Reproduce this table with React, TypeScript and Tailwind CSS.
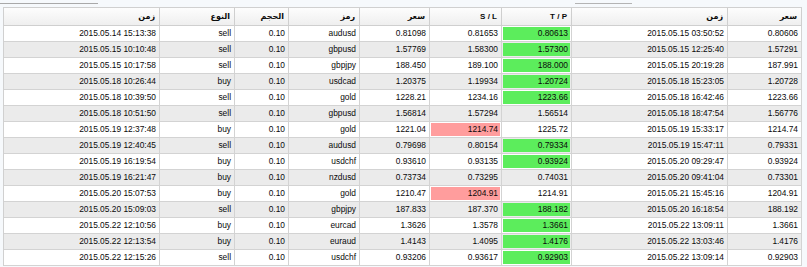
import React from "react";

type Row = {
  t: string; type: string; vol: string; sym: string; price: string;
  sl: string; tp: string; ct: string; cp: string; slc?: boolean; tpc?: boolean;
};

const rows: Row[] = [
  { t: "2015.05.14 15:13:38", type: "sell", vol: "0.10", sym: "audusd", price: "0.81098", sl: "0.81653", tp: "0.80613", ct: "2015.05.15 03:50:52", cp: "0.80606", tpc: true },
  { t: "2015.05.15 10:10:48", type: "sell", vol: "0.10", sym: "gbpusd", price: "1.57769", sl: "1.58300", tp: "1.57300", ct: "2015.05.15 12:25:40", cp: "1.57291", tpc: true },
  { t: "2015.05.15 10:17:58", type: "sell", vol: "0.10", sym: "gbpjpy", price: "188.450", sl: "189.100", tp: "188.000", ct: "2015.05.15 20:19:28", cp: "187.991", tpc: true },
  { t: "2015.05.18 10:26:44", type: "buy", vol: "0.10", sym: "usdcad", price: "1.20375", sl: "1.19934", tp: "1.20724", ct: "2015.05.18 15:23:05", cp: "1.20728", tpc: true },
  { t: "2015.05.18 10:39:50", type: "sell", vol: "0.10", sym: "gold", price: "1228.21", sl: "1234.16", tp: "1223.66", ct: "2015.05.18 16:42:46", cp: "1223.66", tpc: true },
  { t: "2015.05.18 10:51:50", type: "sell", vol: "0.10", sym: "gbpusd", price: "1.56814", sl: "1.57294", tp: "1.56514", ct: "2015.05.18 18:47:54", cp: "1.56776" },
  { t: "2015.05.19 12:37:48", type: "buy", vol: "0.10", sym: "gold", price: "1221.04", sl: "1214.74", tp: "1225.72", ct: "2015.05.19 15:33:17", cp: "1214.74", slc: true },
  { t: "2015.05.19 12:40:45", type: "sell", vol: "0.10", sym: "audusd", price: "0.79698", sl: "0.80154", tp: "0.79334", ct: "2015.05.19 15:47:11", cp: "0.79331", tpc: true },
  { t: "2015.05.19 16:19:54", type: "buy", vol: "0.10", sym: "usdchf", price: "0.93610", sl: "0.93135", tp: "0.93924", ct: "2015.05.20 09:29:47", cp: "0.93924", tpc: true },
  { t: "2015.05.19 16:21:47", type: "buy", vol: "0.10", sym: "nzdusd", price: "0.73734", sl: "0.73295", tp: "0.74031", ct: "2015.05.20 09:41:04", cp: "0.73301" },
  { t: "2015.05.20 15:07:53", type: "buy", vol: "0.10", sym: "gold", price: "1210.47", sl: "1204.91", tp: "1214.91", ct: "2015.05.21 15:45:16", cp: "1204.91", slc: true },
  { t: "2015.05.20 15:09:03", type: "sell", vol: "0.10", sym: "gbpjpy", price: "187.833", sl: "187.370", tp: "188.182", ct: "2015.05.20 16:18:54", cp: "188.192", tpc: true },
  { t: "2015.05.22 12:10:56", type: "buy", vol: "0.10", sym: "eurcad", price: "1.3626", sl: "1.3578", tp: "1.3661", ct: "2015.05.22 13:09:11", cp: "1.3661", tpc: true },
  { t: "2015.05.22 12:13:54", type: "buy", vol: "0.10", sym: "euraud", price: "1.4143", sl: "1.4095", tp: "1.4176", ct: "2015.05.22 13:03:46", cp: "1.4176", tpc: true },
  { t: "2015.05.22 12:15:26", type: "sell", vol: "0.10", sym: "usdchf", price: "0.93206", sl: "0.93617", tp: "0.92903", ct: "2015.05.22 13:09:14", cp: "0.92903", tpc: true },
];

const headers = ["زمن", "النوع", "الحجم", "رمز", "سعر", "S / L", "T / P", "زمن", "سعر"];

const grid = "grid grid-cols-[156px_75px_54px_71px_70px_72px_70px_156px_74px]";

function Cell({ v, color }: { v: string; color?: "g" | "r" }) {
  if (color) {
    return (
      <div className="border-r border-b border-[#d3d3d3] h-[16px] p-[1px]">
        <div
          className={
            "h-full flex items-center justify-end pr-[2px] " +
            (color === "g" ? "bg-[#5ced5c]" : "bg-[#ff9d9d]")
          }
        >
          {v}
        </div>
      </div>
    );
  }
  return (
    <div className="border-r border-b border-[#d3d3d3] h-[16px] flex items-center justify-end pr-[3px]">
      {v}
    </div>
  );
}

export default function App() {
  return (
    <div
      className="w-[807px] h-[267px] bg-[#f6f9fc] overflow-hidden text-[8.4px] text-[#0a0a0a]"
      style={{ fontFamily: '"Liberation Sans", "DejaVu Sans", Arial, sans-serif' }}
    >
      <div className="h-[7px] flex pt-[3px]">
        <div className="w-[98px] h-[1px] bg-[#a9a9a9]" />
        <div className="w-[477px]" />
        <div className="w-[57px] h-[1px] bg-[#b4b4b4]" />
      </div>
      <div className="pl-[3px]">
        <div className="w-[799px] border-l border-t border-[#d0d0d0] bg-white">
          <div className={grid + " h-[18px] bg-gradient-to-b from-[#fdfdfd] to-[#eeeeee]"}>
            {headers.map((h, i) => (
              <div
                key={i}
                className="border-r border-b border-[#cfcfcf] flex items-center justify-end pr-[4px] font-bold text-[8px]"
              >
                {h}
              </div>
            ))}
          </div>
          {rows.map((r, i) => (
            <div key={i} className={grid + (i % 2 === 1 ? " bg-[#ebebeb]" : " bg-white")}>
              <Cell v={r.t} />
              <Cell v={r.type} />
              <Cell v={r.vol} />
              <Cell v={r.sym} />
              <Cell v={r.price} />
              <Cell v={r.sl} color={r.slc ? "r" : undefined} />
              <Cell v={r.tp} color={r.tpc ? "g" : undefined} />
              <Cell v={r.ct} />
              <Cell v={r.cp} />
            </div>
          ))}
        </div>
      </div>
    </div>
  );
}
